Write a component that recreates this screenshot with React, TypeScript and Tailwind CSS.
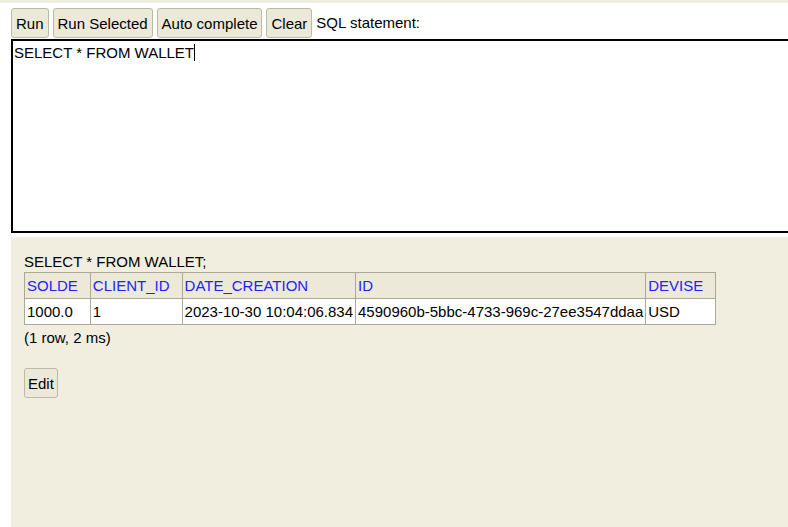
const cols = ['SOLDE', 'CLIENT_ID', 'DATE_CREATION', 'ID', 'DEVISE'];
const row = ['1000.0', '1', '2023-10-30 10:04:06.834', '4590960b-5bbc-4733-969c-27ee3547ddaa', 'USD'];

function Btn({ label }: { label: string }) {
  return (
    <button className="h-[30px] px-[4px] bg-[#ece9d8] border border-[#bdb9a6] rounded-[3px] text-[15px] text-black leading-none">
      {label}
    </button>
  );
}

export default function App() {
  return (
    <div className="min-h-[527px] w-[788px] overflow-hidden bg-white flex flex-col font-['Liberation_Sans',Arial,sans-serif] text-black text-[15px]">
      <div className="h-[3px] bg-[#f1eedf]" />
      <div className="flex items-center gap-[4px] pl-[11px] pt-[5px] h-[36px] pb-[1px]">
        <Btn label="Run" />
        <Btn label="Run Selected" />
        <Btn label="Auto complete" />
        <Btn label="Clear" />
        <span className="whitespace-nowrap">SQL statement:</span>
      </div>
      <div className="ml-[11px] w-[800px] h-[194px] border-2 border-black px-[1px] pt-[3px] leading-[17px] flex items-start">
        <span>SELECT * FROM WALLET</span>
        <span className="inline-block w-px h-[17px] bg-black" />
      </div>
      <div className="flex-1 ml-[11px] mt-[4px] bg-[#f1eedf] pl-[13px] pt-[16px] leading-[17px] min-h-[290px]">
        <div>SELECT * FROM WALLET;</div>
        <table className="border-collapse mt-[2px]">
          <thead>
            <tr>
              {cols.map(c => (
                <th key={c} className="text-left font-normal text-[#2222ff] bg-[#ece9d8] border border-[#aca899] h-[26px] pl-[2px] pr-[12px] whitespace-nowrap">{c}</th>
              ))}
            </tr>
          </thead>
          <tbody>
            <tr>
              {row.map((v, i) => (
                <td key={i} className="bg-white border border-[#aca899] h-[26px] px-[2px] whitespace-nowrap">{v}</td>
              ))}
            </tr>
          </tbody>
        </table>
        <div className="mt-[4px]">(1 row, 2 ms)</div>
        <div className="mt-[22px]">
          <button className="h-[30px] px-[3px] bg-[#ece9d8] border border-[#bdb9a6] rounded-[3px] leading-none">Edit</button>
        </div>
      </div>
    </div>
  );
}
